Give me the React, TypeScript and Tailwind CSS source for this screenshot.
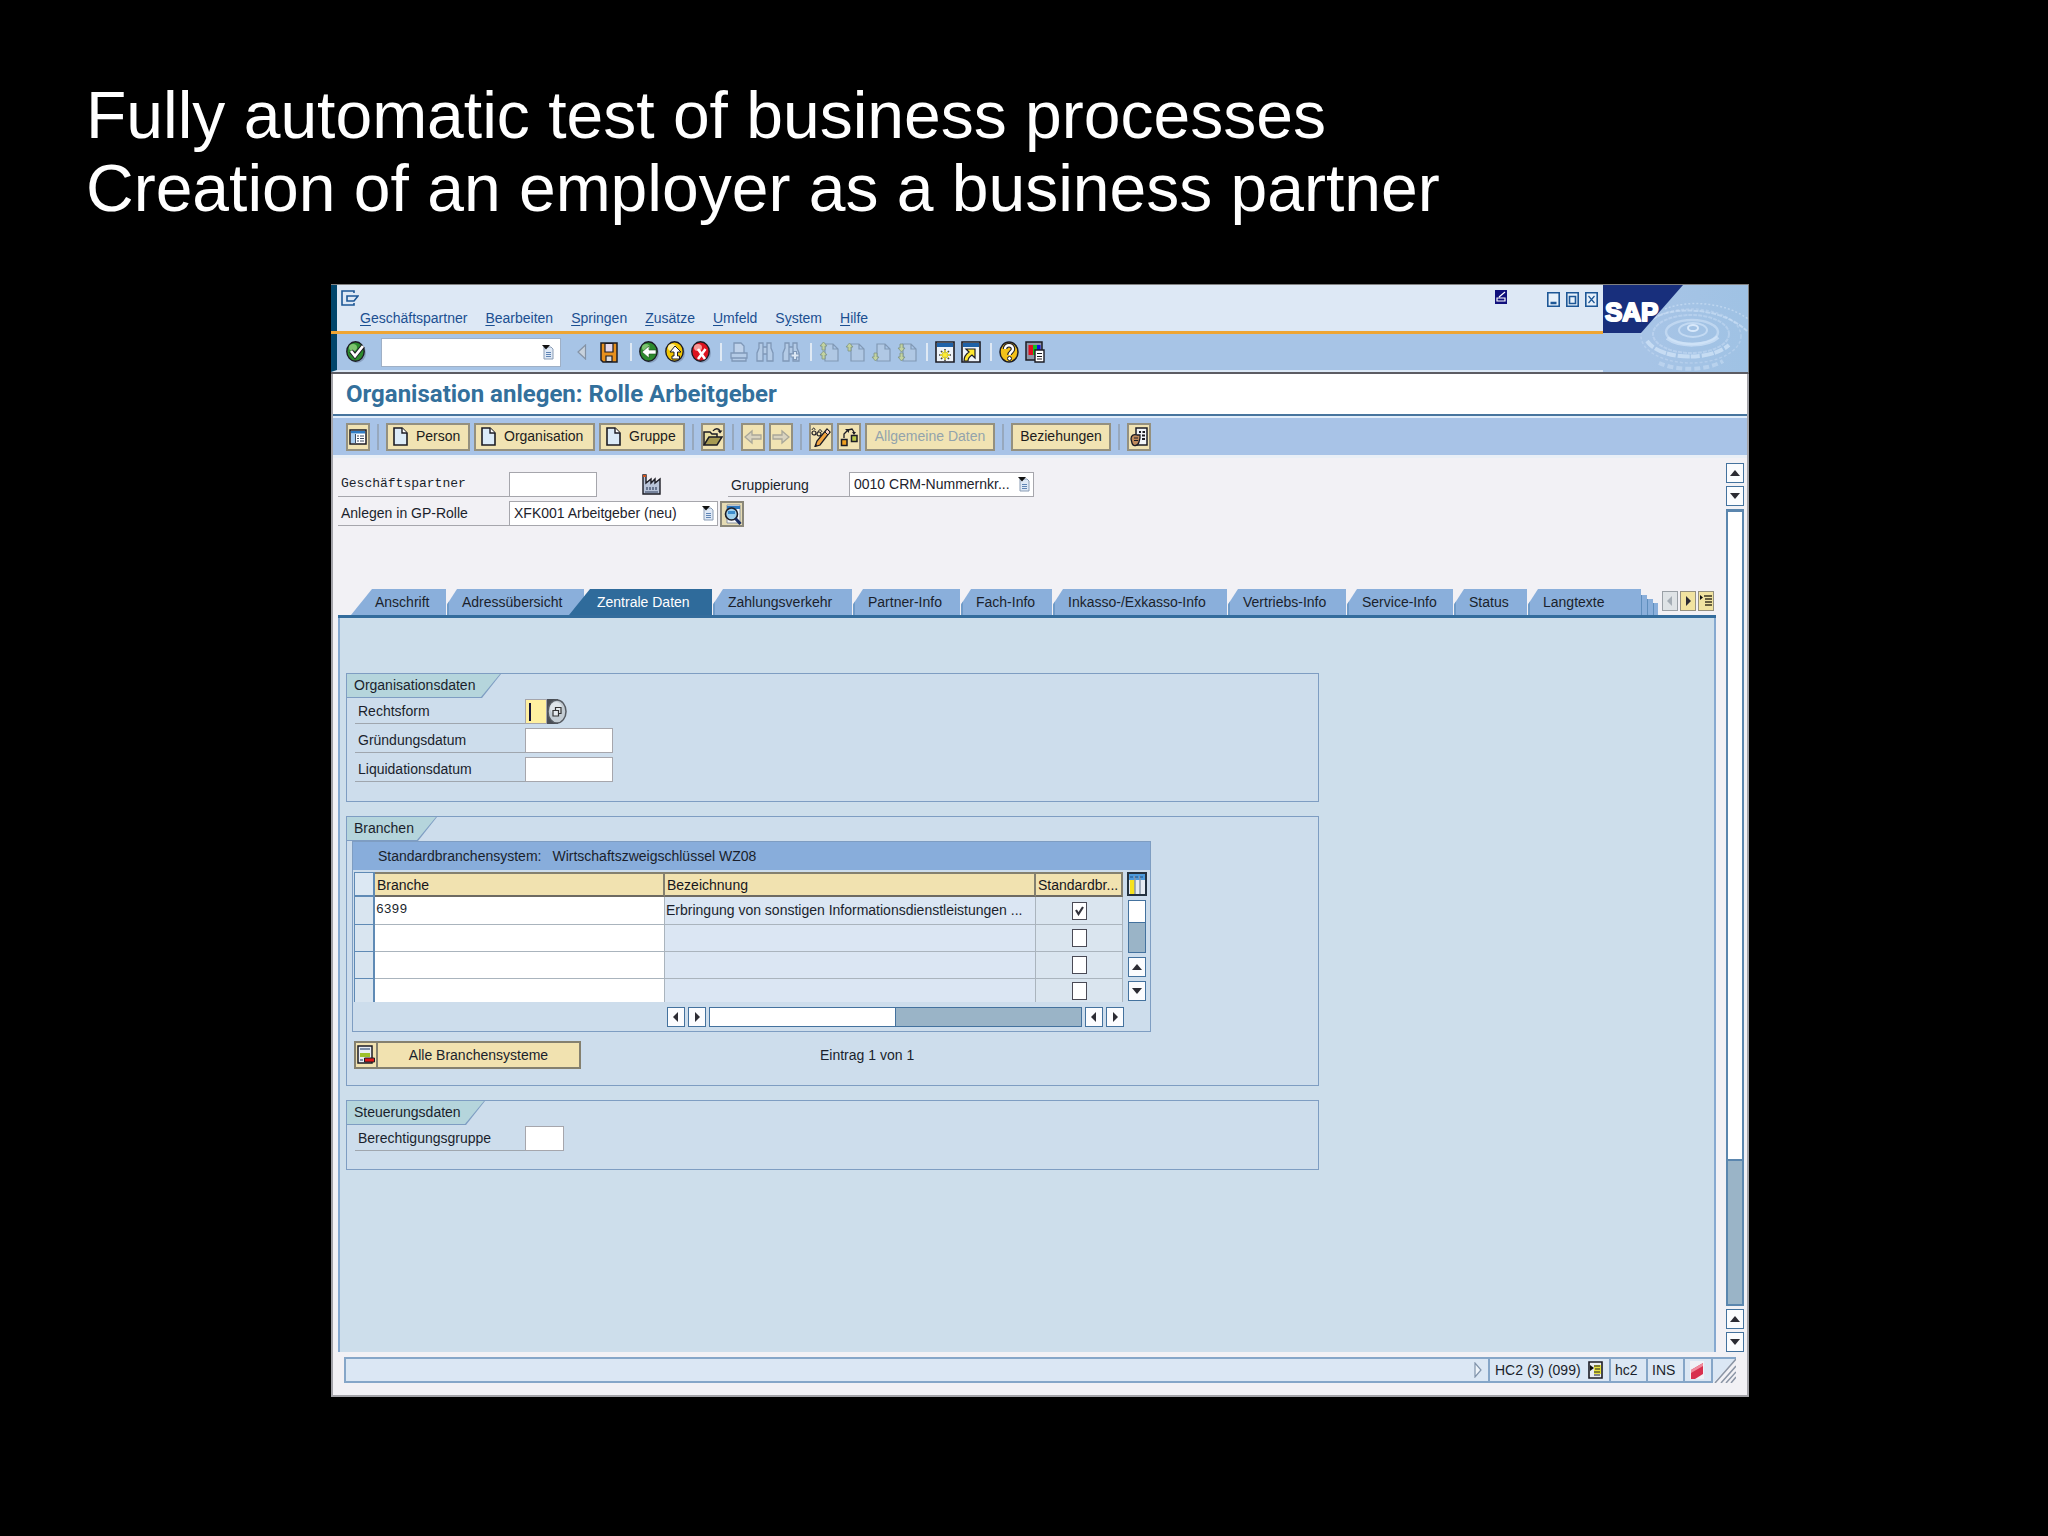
import React from 'react';
import clsx from 'clsx';

const INK = '#1c1c24';

interface IconProps {
    className?: string;
    box?: string;
    children: React.ReactNode;
}

const Icon: React.FC<IconProps> = ({ className = 'w-5 h-[22px]', box = '0 0 20 22', children }) => (
    <svg viewBox={box} preserveAspectRatio="none" className={clsx('shrink-0', className)} fill="none" aria-hidden="true">
        {children}
    </svg>
);

const PageIcon = () => (
    <Icon className="w-[15px] h-[19px]" box="0 0 15 19">
        <path d="M1 1H9L14 6V18H1Z" fill="#dcebf8" stroke={INK} strokeWidth="1.6" />
        <path d="M9 1V6H14" fill="#fff" stroke={INK} strokeWidth="1.4" />
    </Icon>
);

// little sheet with a black triangle that marks every drop-down
const ListIcon = ({ className }: { className?: string }) => (
    <Icon className={clsx('w-3 h-[15px] pointer-events-none', className)} box="0 0 12 15">
        <path d="M2 2H9L11 4V14H2Z" fill="#dfe9f6" stroke="#8b9db5" />
        <path d="M4 7.500H9M4 9.500H9M4 11.500H9" stroke="#5f84b4" />
        <path d="M0 0H8L4 4.500Z" fill="#111" />
    </Icon>
);

const Ball = ({ color, light }: { color: string; light: string }) => (
    <>
        <ellipse cx="11" cy="12" rx="9" ry="10" fill="#7389a8" opacity=".6" />
        <ellipse cx="9.500" cy="10.500" rx="8.700" ry="9.700" fill={color} stroke={INK} strokeWidth="1.4" />
        <ellipse cx="7" cy="6.500" rx="4" ry="3.500" fill={light} />
    </>
);

const binoculars = (
    <path d="M2 20V12L4 7V2H8V6H12V2H16V7L18 12V20H12V13H8V20ZM8 6V13M12 6V13" stroke="#7f98b8" strokeWidth="1.3" fill="#b4cbe6" />
);

const sheet = <path d="M6 3H14L19 8V20H6Z M14 3V8H19" fill="#b0c8e4" stroke="#8199b5" strokeWidth="1.2" />;
const up = (y: number) => <path key={y} d={`M4.500 ${y}L8 ${y + 4}H6V${y + 8}H3V${y + 4}H1Z`} fill="#c3d3a0" stroke="#7f9483" strokeWidth=".8" />;
const down = (y: number) => <path key={y} d={`M4.500 ${y + 8}L8 ${y + 4}H6V${y}H3V${y + 4}H1Z`} fill="#c3d3a0" stroke="#7f9483" strokeWidth=".8" />;

const toolGroups: { label: string; art: React.ReactNode }[][] = [
    [
        { label: 'Zurück', art: <><Ball color="#2c8a2e" light="#7cc46e" /><path d="M3 11L10 5V9H17V13H10V17Z" fill="#fff" stroke="#1c4d1c" strokeWidth=".6" /></> },
        { label: 'Beenden', art: <><Ball color="#f0c400" light="#fff0a0" /><path d="M10 5L16 11H12.500V15H14.500V18H7V15H9V11H5Z" fill="#fff" stroke={INK} strokeWidth="1" /></> },
        { label: 'Abbrechen', art: <><Ball color="#dd1420" light="#f79a98" /><path d="M7 8L14 18M14.500 8L7 18" stroke="#fff" strokeWidth="2.600" /></> },
    ],
    [
        { label: 'Drucken', art: <><path d="M5 12V2H12L15 5V12" fill="#bfd2ea" stroke="#7f98b8" strokeWidth="1.300" /><path d="M2 12H18V17H2ZM3 17V20H17V17" fill="#b4cbe6" stroke="#7f98b8" strokeWidth="1.300" /></> },
        { label: 'Suchen', art: binoculars },
        { label: 'Weiter suchen', art: <>{binoculars}<path d="M14 10V19M9.500 14.500H18.500" stroke="#7f98b8" strokeWidth="4" /><path d="M14 11V18M10.500 14.500H17.500" stroke="#dde8f4" strokeWidth="2" /></> },
    ],
    [
        { label: 'Erste Seite', art: <>{sheet}{up(1)}{up(10)}</> },
        { label: 'Vorige Seite', art: <>{sheet}{up(2)}</> },
        { label: 'Nächste Seite', art: <>{sheet}{down(12)}</> },
        { label: 'Letzte Seite', art: <>{sheet}{down(3)}{down(12)}</> },
    ],
    [
        { label: 'Neuer Modus', art: <><path d="M1 1H19V21H1Z" fill="#eef3f8" stroke={INK} strokeWidth="1.600" /><path d="M2 2H18V6H2Z" fill="#1f62a8" /><path d="M10 8V20M4 14H16M6 10L14 18M14 10L6 18" stroke="#444" strokeWidth="1.600" /><path d="M10 9V19M5 14H15M7 11L13 17M13 11L7 17" stroke="#ffef30" strokeWidth="1.400" /></> },
        { label: 'Verknüpfung', art: <><path d="M1 1H19V21H1Z" fill="#eef3f8" stroke={INK} strokeWidth="1.600" /><path d="M2 2H18V6H2Z" fill="#1f62a8" /><path d="M5 8H14V17L11 14C8 16 7 18 7 20H3C3 15 5 13 8 11Z" fill="#ffe830" stroke={INK} strokeWidth="1.200" /></> },
    ],
    [
        { label: 'Hilfe', art: <><ellipse cx="10" cy="11" rx="9" ry="10" fill="#f3c21a" stroke={INK} strokeWidth="1.500" /><path d="M6 8C6 3 14 3 14 8C14 11 10.500 11 10.500 14" stroke={INK} strokeWidth="4.500" /><path d="M6 8C6 3 14 3 14 8C14 11 10.500 11 10.500 14" stroke="#fff" strokeWidth="2.400" /><circle cx="10.500" cy="17.500" r="2" fill="#fff" stroke={INK} /></> },
        { label: 'Lokales Layout', art: <><path d="M1 1H17V19H1Z" fill="#8f97a8" stroke={INK} strokeWidth="1.500" /><path d="M3.500 4H8V14H3.500Z" fill="#e01020" /><path d="M8 4H12V14H8Z" fill="#12c020" /><path d="M12 4H15.500V14H12Z" fill="#1010e0" /><path d="M10 9H19V21H10Z" fill="#fff" stroke={INK} strokeWidth="1.400" /><path d="M12 12.500H17M12 15.500H17M12 18H17" stroke={INK} /></> },
    ],
];

const Sep = ({ className }: { className?: string }) => <span className={clsx('w-[2px] shrink-0', className)} />;

const menus = ['Geschäftspartner', 'Bearbeiten', 'Springen', 'Zusätze', 'Umfeld', 'System', 'Hilfe'];

const MenuLabel = ({ text }: { text: string }) => {
    const at = text === 'System' ? 1 : 0;
    return <>{text.slice(0, at)}<span className="underline underline-offset-2">{text[at]}</span>{text.slice(at + 1)}</>;
};

const Logo = () => (
    <svg viewBox="0 0 145 87" className="w-[145px] h-[87px] shrink-0 bg-[#a4c4e5]" role="img" aria-label="SAP">
        <defs>
            <linearGradient id="water" x1="0" x2="1" y1="0" y2="0">
                <stop offset=".3" stopColor="#a7c4e6" />
                <stop offset="1" stopColor="#9fc2e4" />
            </linearGradient>
        </defs>
        <rect width="146" height="87" fill="url(#water)" />
        <g fill="none" stroke="#d9e9fb">
            <ellipse cx="90" cy="43" rx="5" ry="3" strokeWidth="2" />
            <ellipse cx="90" cy="45" rx="14" ry="7" strokeWidth="2" opacity=".6" />
            <ellipse cx="89" cy="47" rx="26" ry="12" strokeWidth="2.500" opacity=".5" />
            <ellipse cx="88" cy="49" rx="38" ry="19" strokeWidth="2" opacity=".35" strokeDasharray="4 1" />
            <ellipse cx="88" cy="51" rx="50" ry="27" strokeWidth="1.500" opacity=".3" strokeDasharray="3 2" />
            <path d="M64 53C76 62 104 62 115 52" strokeWidth="4" opacity=".6" />
            <path d="M44 56C58 76 108 76 126 60" strokeWidth="4" strokeDasharray="9 2 12 1" opacity=".65" />
            <path d="M56 78C74 86 104 86 120 76" strokeWidth="4" strokeDasharray="6 3" opacity=".4" />
            <path d="M50 34C66 22 116 20 144 46" strokeWidth="2" strokeDasharray="5 1" opacity=".5" />
            <path d="M62 24C86 14 124 18 145 34" strokeWidth="1.500" strokeDasharray="2 2" opacity=".5" />
        </g>
        <path d="M0 0H80L38 48H0Z" fill="#182f7c" />
        <text x="2" y="36" fill="#fff" stroke="#fff" strokeWidth="2" strokeLinejoin="round" fontSize="26" fontWeight="700" fontFamily="Liberation Sans, Arial, sans-serif">SAP</text>
    </svg>
);

const Header = () => (
    <header className="flex border-t border-r border-t-[#808080] border-r-[#808080] border-b-2 border-b-[#5c5c63]">
        <div className="flex-1 min-w-0">
            <div className="h-[46px] flex border-l-[6px] border-[#00456b] bg-[#dde8f5] pt-[5px]">
                <div className="flex-1 pl-1">
                    <Icon className="w-[18px] h-[16px]" box="0 0 18 16">
                        <path d="M13 3V1H1V15H13V13" stroke="#1d5796" strokeWidth="1.600" />
                        <path d="M6 6H17L13 11H6Z" stroke="#1d5796" strokeWidth="1.600" />
                    </Icon>
                    <nav className="flex gap-[18px] pl-[19px] mt-[2px] leading-5 text-[#1b4f91]">
                        {menus.map((m) => (
                            <button key={m} type="button" className="leading-5"><MenuLabel text={m} /></button>
                        ))}
                    </nav>
                </div>
                <div className="flex items-start pr-[5px]">
                    <Icon className="w-3 h-[14px] mr-10" box="0 0 12 14">
                        <rect width="12" height="14" fill="#10107c" />
                        <path d="M2 8H10V11H2ZM4 7L10 2" stroke="#fff" strokeWidth="1.200" />
                    </Icon>
                    <div className="flex gap-[6px] pt-[2px]">
                        <button type="button" aria-label="Minimieren" className="w-[13px] h-[15px]">
                            <Icon className="w-[13px] h-[15px]" box="0 0 13 15"><path d="M.8.8H12.200V14.200H.8Z" stroke="#1d5796" strokeWidth="1.600" fill="#e6f0fa" /><path d="M3.500 11H9.500" stroke="#1d5796" strokeWidth="2.500" /></Icon>
                        </button>
                        <button type="button" aria-label="Maximieren" className="w-[13px] h-[15px]">
                            <Icon className="w-[13px] h-[15px]" box="0 0 13 15"><path d="M.8.8H12.200V14.200H.8Z" stroke="#1d5796" strokeWidth="1.600" fill="#e6f0fa" /><path d="M3.500 4.500H9.500V11.500H3.500ZM3 4.500H10" stroke="#1d5796" strokeWidth="1.600" /></Icon>
                        </button>
                        <button type="button" aria-label="Schließen" className="w-[13px] h-[15px]">
                            <Icon className="w-[13px] h-[15px]" box="0 0 13 15"><path d="M.8.8H12.200V14.200H.8Z" stroke="#1d5796" strokeWidth="1.600" fill="#e6f0fa" /><path d="M3.500 4L9.500 11M9.500 4L3.500 11" stroke="#1d5796" strokeWidth="1.200" /></Icon>
                        </button>
                    </div>
                </div>
            </div>
            <div className="h-[3px] bg-[#eea533]" />
            <div className="h-[38px] flex items-center border-l-[6px] border-l-[#00456b] border-b-2 border-b-[#dbe8f6] bg-[#a7c4e6] pl-[9px]">
                <button type="button" aria-label="Enter">
                    <Icon><Ball color="#2c8a2e" light="#7cc46e" /><path d="M5 10L9 15L17 5" stroke={INK} strokeWidth="4.500" /><path d="M5 10L9 15L17 5" stroke="#fff" strokeWidth="2.800" /></Icon>
                </button>
                <div className="relative ml-[15px]">
                    <input aria-label="Kommandofeld" className="block w-[180px] h-[29px] border border-[#9fb0c6] bg-white px-2 outline-none" />
                    <ListIcon className="absolute right-[7px] top-[7px]" />
                </div>
                <button type="button" aria-label="Zuklappen" className="ml-4">
                    <Icon className="w-[10px] h-[16px]" box="0 0 10 16"><path d="M8.500 1V15L1 8Z" fill="#c8d2dd" stroke="#8493a6" strokeWidth="1.200" /></Icon>
                </button>
                <button type="button" aria-label="Sichern" className="ml-[13px] mr-[3px]">
                    <Icon className="w-[18px] h-[21px]" box="0 0 18 21">
                        <path d="M1 1H17V20H3L1 18Z" fill="#e8901c" stroke={INK} strokeWidth="1.500" />
                        <path d="M5 1.500H13V10H5Z" fill="#e6d8ea" stroke={INK} strokeWidth="1.200" />
                        <path d="M6 14H12V19.500H6Z" fill="#ddd" stroke={INK} strokeWidth="1.200" />
                    </Icon>
                </button>
                {toolGroups.map((group, i) => (
                    <div key={i} className="flex items-center gap-[6px] ml-[9px]">
                        <Sep className="h-[18px] mr-[1px] bg-[#dfe9f4]" />
                        {group.map(({ label, art }) => (
                            <button key={label} type="button" aria-label={label}><Icon>{art}</Icon></button>
                        ))}
                    </div>
                ))}
            </div>
        </div>
        <Logo />
    </header>
);

const btn = 'h-7 shrink-0 flex items-center border-2 border-[#94907f] bg-[#f1e3b3] text-[#1c1c1c]';

const IconButton = ({ label, children }: { label: string; children: React.ReactNode }) => (
    <button type="button" aria-label={label} className={clsx(btn, 'w-6 justify-center')}>{children}</button>
);

const BarSep = () => <Sep className="h-[26px] mx-[3px] bg-[#97a8bd]" />;

const AppBar = () => (
    <div className="flex items-center gap-1 h-[42px] border-t-2 border-b-[3px] border-t-[#e2eefb] border-b-[#e9eff6] bg-[#a8c3e7] pl-[13px]">
        <IconButton label="Übersicht">
            <Icon className="w-[18px] h-[16px]" box="0 0 18 16">
                <path d="M1 1H17V15H1Z" fill="#fff" stroke={INK} strokeWidth="1.500" />
                <path d="M2 2H16V4.500H2Z" fill="#2f7cc4" /><path d="M2 5H6V14H2Z" fill="#a8cdf0" />
                <path d="M6.500 5V14M8 7H10M11 7H15M8 9.500H10M11 9.500H15M8 12H10M11 12H15" stroke="#3a4a60" />
            </Icon>
        </IconButton>
        <BarSep />
        <button type="button" className={clsx(btn, 'w-[84px] pl-[5px] gap-2')}><PageIcon />Person</button>
        <button type="button" className={clsx(btn, 'w-[121px] pl-[5px] gap-2')}><PageIcon />Organisation</button>
        <button type="button" className={clsx(btn, 'w-[86px] pl-[5px] gap-2')}><PageIcon />Gruppe</button>
        <BarSep />
        <IconButton label="Öffnen">
            <Icon className="w-5 h-5" box="0 0 20 20">
                <path d="M1 18V5H7L9 7H14V10" fill="#e9dfa2" stroke={INK} strokeWidth="1.500" />
                <path d="M1 18L6 10H19L14 18Z" fill="#a79a52" stroke={INK} strokeWidth="1.500" />
                <path d="M10 4C12 1 16 1 17 4" stroke={INK} strokeWidth="1.300" /><path d="M14.500 3.500H19.500L17 6.500Z" fill={INK} />
            </Icon>
        </IconButton>
        <BarSep />
        <IconButton label="Zurück">
            <Icon className="w-[18px] h-4" box="0 0 18 16"><path d="M1 8L8 2V6H17V10H8V14Z" fill="#d9d3c0" stroke="#a9a799" strokeWidth="1.300" /></Icon>
        </IconButton>
        <IconButton label="Vor">
            <Icon className="w-[18px] h-4" box="0 0 18 16"><path d="M17 8L10 2V6H1V10H10V14Z" fill="#d9d3c0" stroke="#a9a799" strokeWidth="1.300" /></Icon>
        </IconButton>
        <BarSep />
        <IconButton label="Anzeigen/Ändern">
            <Icon className="w-5 h-5" box="0 0 20 20">
                <path d="M1 3C2 0 4 1 4 3M7 5C8 2 10 2 11 5" stroke={INK} />
                <circle cx="3" cy="6" r="2" stroke={INK} strokeWidth="1.200" /><circle cx="8" cy="7" r="2" stroke={INK} strokeWidth="1.200" />
                <path d="M16 2L19 5L9 18L4 19.500L6 14Z" fill="#f2a440" stroke={INK} strokeWidth="1.300" />
                <path d="M16 2L19 5L17 8L14 5Z" fill="#f5d0c0" stroke={INK} /><path d="M4 19.500L4.800 17L6.500 18.500Z" fill={INK} />
            </Icon>
        </IconButton>
        <IconButton label="Zuordnen">
            <Icon className="w-[18px] h-5" box="0 0 18 20">
                <path d="M1.500 12.500H7V18.500H1.500Z" fill="#f0a020" stroke={INK} strokeWidth="1.500" />
                <path d="M11.500 8.500H17V14.500H11.500Z" fill="#b8c848" stroke={INK} strokeWidth="1.500" />
                <path d="M4 11V7L8 3M8 3L12 2L14 5" stroke={INK} strokeWidth="1.300" /><path d="M5 2H9V6ZM12 5H16L14 8Z" fill={INK} />
            </Icon>
        </IconButton>
        <button type="button" disabled className={clsx(btn, 'w-[130px] justify-center')}><span className="text-[#93a3ac]">Allgemeine Daten</span></button>
        <BarSep />
        <button type="button" className={clsx(btn, 'w-[100px] justify-center')}>Beziehungen</button>
        <BarSep />
        <IconButton label="Selektion">
            <Icon className="w-[18px] h-5" box="0 0 18 20">
                <path d="M6 1H17V18H6Z" fill="#f2f5f9" stroke={INK} strokeWidth="1.500" />
                <path d="M9 5H11M12.500 5H15M12 8.500H15M12 12H15" stroke={INK} strokeWidth="2" />
                <path d="M1 12C1 8 4 7 7 8H10V11L9 15C8 19 3 20 2 16Z" fill="#c08a5c" stroke={INK} strokeWidth="1.300" />
                <path d="M4 11H8M4 13.500H8" stroke={INK} />
            </Icon>
        </IconButton>
    </div>
);

const field = 'block h-[25px] shrink-0 border border-[#a6a6ac] bg-white outline-none rounded-none';

interface PickerProps {
    id: string;
    value: string;
    className: string;
}

const Picker: React.FC<PickerProps> = ({ id, value, className }) => (
    <div className={clsx('relative shrink-0', className)}>
        <select id={id} className={clsx(field, 'appearance-none w-full pl-1 pb-px text-[#22222c]')}>
            <option>{value}</option>
        </select>
        <ListIcon className="absolute right-[4px] top-[5px]" />
    </div>
);

const HeadForm = () => (
    <div className="flex flex-col gap-1 pt-[14px] pl-[5px]">
        <div className="flex">
            <label htmlFor="gp" className="w-[171px] h-[25px] leading-6 pl-[3px] border-b border-[#a6a6ac] font-['Liberation_Mono',monospace] text-[13px]">Geschäftspartner</label>
            <input id="gp" className={clsx(field, 'w-[88px] px-1')} />
            <Icon className="w-[19px] h-[21px] ml-[45px] mr-[67px] mt-[2px]" box="0 0 19 21">
                <path d="M1 20V1H4V9L9 5V9L13 5V9L18 5V20Z" fill="#b9c4d8" stroke={INK} strokeWidth="1.400" />
                <path d="M1 2H4" stroke="#d2541c" strokeWidth="2" /><path d="M5 13V16M8 13V16M11 13V16M14 13V16M3 18H16" stroke="#33415f" strokeWidth="1.200" />
            </Icon>
            <label htmlFor="grp" className="w-[121px] h-[25px] leading-[26px] pl-[3px] border-b border-[#a6a6ac]">Gruppierung</label>
            <Picker id="grp" value="0010 CRM-Nummernkr..." className="w-[185px]" />
        </div>
        <div className="flex">
            <label htmlFor="rolle" className="w-[171px] h-[25px] leading-6 pl-[3px] border-b border-[#a6a6ac]">Anlegen in GP-Rolle</label>
            <Picker id="rolle" value="XFK001 Arbeitgeber (neu)" className="w-[209px]" />
            <button type="button" aria-label="Detail" className="w-6 h-[26px] ml-[2px] flex items-center justify-center border-2 border-[#8b887a] bg-[#e6dcb4]">
                <Icon className="w-[19px] h-[21px]" box="0 0 19 21">
                    <path d="M4 1H17V19H4Z" fill="#f6f8fa" stroke="#8a93a0" /><path d="M4 2H17V5H4Z" fill="#2c78bf" />
                    <circle cx="8.500" cy="10" r="6" fill="#9fd0ee" stroke={INK} strokeWidth="1.600" />
                    <path d="M5 7H12V10H5Z" fill="#3d8ccc" /><path d="M12.500 14.500L17.500 20" stroke="#1b2f66" strokeWidth="3" />
                </Icon>
            </button>
        </div>
    </div>
);

const tabs = [
    { name: 'Anschrift', width: 'w-[95px]' },
    { name: 'Adressübersicht', width: 'w-[137px]' },
    { name: 'Zentrale Daten', width: 'w-[143px]' },
    { name: 'Zahlungsverkehr', width: 'w-[139px]' },
    { name: 'Partner-Info', width: 'w-[107px]' },
    { name: 'Fach-Info', width: 'w-[91px]' },
    { name: 'Inkasso-/Exkasso-Info', width: 'w-[174px]' },
    { name: 'Vertriebs-Info', width: 'w-[118px]' },
    { name: 'Service-Info', width: 'w-[106px]' },
    { name: 'Status', width: 'w-[73px]' },
    { name: 'Langtexte', width: 'w-[113px]' },
];

const Arrow = ({ dir, color = '#2b2b33' }: { dir: 'up' | 'down' | 'left' | 'right'; color?: string }) => {
    const paths = { up: 'M0 8L5 2L10 8Z', down: 'M0 2L5 8L10 2Z', left: 'M7 0V10L2 5Z', right: 'M3 0V10L8 5Z' };
    return <Icon className="w-[10px] h-[10px]" box="0 0 10 10"><path d={paths[dir]} fill={color} /></Icon>;
};

const TabStrip = () => (
    <div className="flex h-[29px] border-b-[3px] border-[#336c9c]">
        <div role="tablist" className="flex gap-px pl-[13px] h-[26px]">
            {tabs.map(({ name, width }, i) => {
                const active = name === 'Zentrale Daten';
                return (
                    <button
                        key={name}
                        type="button"
                        role="tab"
                        aria-selected={active}
                        className={clsx(
                            'shrink-0 text-left leading-[26px] whitespace-nowrap',
                            width,
                            i === 0 && 'pl-6 bg-[#8aafdb] [clip-path:polygon(0_100%,21px_0,100%_0,100%_100%)]',
                            active && '-ml-4 pl-7 bg-[#2f6b9b] text-white [clip-path:polygon(0_100%,21px_0,100%_0,100%_100%)]',
                            i > 0 && !active && 'pl-[13px] border-l-2 border-[#6f9bc8] bg-[#8aafdb] [clip-path:polygon(0_60%,10px_0,100%_0,100%_100%,0_100%)]'
                        )}
                    >
                        {name}
                    </button>
                );
            })}
        </div>
        <div className="flex items-end h-[26px]">
            <span className="w-[6px] h-5 border-l border-[#5f8ebd] bg-[#8aafdb]" />
            <span className="w-[6px] h-4 border-l border-[#5f8ebd] bg-[#8aafdb]" />
            <span className="w-[5px] h-3 border-l border-[#5f8ebd] bg-[#8aafdb]" />
        </div>
        <div className="flex gap-[2px] pt-[2px] pl-1">
            <button type="button" aria-label="Tabs zurück" className="w-4 h-5 flex items-center justify-center border border-[#9aa0a6] bg-[#dfe3e6]"><Arrow dir="left" color="#a5adb5" /></button>
            <button type="button" aria-label="Tabs vor" className="w-4 h-5 flex items-center justify-center border border-[#94907f] bg-[#f1e3a0]"><Arrow dir="right" /></button>
            <button type="button" aria-label="Tabliste" className="w-4 h-5 flex items-center justify-center border border-[#94907f] bg-[#f1e3a0]">
                <Icon className="w-3 h-[14px]" box="0 0 12 14"><path d="M0 1V6L3 3.500Z" fill="#111" /><path d="M4 2H12M5 5H12M5 8H12M5 11H12" stroke="#3a3420" strokeWidth="1.500" /></Icon>
            </button>
        </div>
    </div>
);

interface GroupProps {
    title: string;
    tab: string;
    className: string;
    children: React.ReactNode;
}

const Group: React.FC<GroupProps> = ({ title, tab, className, children }) => (
    <section className={clsx('w-[973px] max-w-full border border-[#7e9dc2] bg-[#cdddec]', className)}>
        <div className={clsx('h-6 pb-px pr-px bg-[#7e9dc2] [clip-path:polygon(0_0,100%_0,calc(100%_-_19px)_100%,0_100%)]', tab)}>
            <h2 className="h-full pl-[7px] leading-[22px] bg-[#b5d5dc] [clip-path:polygon(0_0,100%_0,calc(100%_-_19px)_100%,0_100%)]">{title}</h2>
        </div>
        {children}
    </section>
);

const FieldRow = ({ id, label, children }: { id: string; label: string; children: React.ReactNode }) => (
    <div className="flex ml-2 h-[25px]">
        <label htmlFor={id} className="w-[170px] leading-6 pl-[3px] border-b border-[#9fa6ae]">{label}</label>
        {children}
    </div>
);

const ScrollButton = ({ dir, className = 'w-[18px] h-5' }: { dir: 'up' | 'down' | 'left' | 'right'; className?: string }) => (
    <button type="button" aria-label={dir} className={clsx('shrink-0 flex items-center justify-center border border-[#44729e] bg-[#fbfcfe]', className)}>
        <Arrow dir={dir} />
    </button>
);

const rows = [
    { code: '6399', text: 'Erbringung von sonstigen Informationsdienstleistungen ...', standard: true, height: 'h-[28px]' },
    { code: '', text: '', standard: false, height: 'h-[27px]' },
    { code: '', text: '', standard: false, height: 'h-[27px]' },
    { code: '', text: '', standard: false, height: 'h-[23px]' },
];

const th = 'h-[25px] pl-[2px] border-2 border-l-0 border-t-[#84806f] border-r-[#84806f] border-b-[#6d6a62] bg-[#f1e2b0] font-normal text-left leading-5 text-[#16161c]';

const BranchTable = () => (
    <div className="w-[799px] ml-[5px] border border-[#7e9dc2]">
        <div className="flex gap-[11px] h-7 pl-[25px] leading-[28px] bg-[#88addb]">
            <span>Standardbranchensystem:</span>
            <span>Wirtschaftszweigschlüssel WZ08</span>
        </div>
        <div className="flex gap-1 pt-[2px] pl-px">
            <table className="table-fixed w-[769px] border-separate border-spacing-0">
                <colgroup>
                    <col className="w-[21px]" />
                    <col className="w-[290px]" />
                    <col className="w-[371px]" />
                    <col className="w-[87px]" />
                </colgroup>
                <thead>
                    <tr>
                        <th aria-label="Markierung" className="p-0 border-t border-l border-r-2 border-b-2 border-[#5f8ab5] bg-[#dce8f3]" />
                        <th className={th}>Branche</th>
                        <th className={th}>Bezeichnung</th>
                        <th className={th}>Standardbr...</th>
                    </tr>
                </thead>
                <tbody>
                    {rows.map((row, i) => (
                        <tr key={i}>
                            <td className={clsx('p-0 border-l border-r-2 border-[#5f8ab5] bg-[#d9e5f0]', i < 3 && 'border-b', row.height)} />
                            <td className={clsx('p-0 border-r border-[#aab4bd] bg-white', i < 3 && 'border-b')}>
                                <input aria-label={`Branche ${i + 1}`} defaultValue={row.code} className="block w-full h-[22px] pl-px pb-[2px] outline-none font-['Liberation_Mono',monospace] text-[13px]" />
                            </td>
                            <td className={clsx('p-0 pl-px border-r border-[#aab4bd] bg-[#dbe6f3] whitespace-nowrap', i < 3 && 'border-b')}>{row.text}</td>
                            <td className={clsx('p-0 border-r border-[#aab4bd] bg-[#dae5ef]', i < 3 && 'border-b')}>
                                <span className="relative flex w-[15px] h-[18px] mx-auto">
                                    <input type="checkbox" aria-label={`Standardbranche ${i + 1}`} defaultChecked={row.standard} className="appearance-none w-full h-full border border-[#4a4a55] bg-white" />
                                    {row.standard && (
                                        <Icon className="absolute left-[3px] top-1 w-[9px] h-[10px] pointer-events-none" box="0 0 9 10">
                                            <path d="M1 4L3.500 8L8 1" stroke="#33333c" strokeWidth="2.200" />
                                        </Icon>
                                    )}
                                </span>
                            </td>
                        </tr>
                    ))}
                </tbody>
            </table>
            <div className="flex flex-col items-center gap-1 w-5">
                <button type="button" aria-label="Konfiguration">
                    <Icon className="w-5 h-6" box="0 0 20 24">
                        <path d="M1 1H19V23H1Z" fill="#e6ecf2" stroke="#24323f" strokeWidth="2" />
                        <path d="M2 2H18V8H2Z" fill="#4d9bdc" /><path d="M3 8H8V22H3Z" fill="#f6e21c" />
                        <path d="M8 4V22M13 4V22" stroke="#8996a8" strokeWidth="1.500" /><path d="M3 5H17" stroke="#1d4f86" strokeDasharray="3 2" />
                    </Icon>
                </button>
                <div className="w-[18px] h-[53px] flex flex-col border border-[#44729e] bg-[#9ab4c7]">
                    <span className="h-[22px] border-b border-[#44729e] bg-white" />
                </div>
                <ScrollButton dir="up" />
                <ScrollButton dir="down" />
            </div>
        </div>
        <div className="flex gap-[3px] mt-[5px] mb-1 ml-[314px] mr-[26px]">
            <ScrollButton dir="left" />
            <ScrollButton dir="right" />
            <div className="flex-1 h-5 flex border border-[#44729e] bg-[#9ab4c7]">
                <span className="w-1/2 border-r border-[#44729e] bg-white" />
            </div>
            <ScrollButton dir="left" />
            <ScrollButton dir="right" />
        </div>
    </div>
);

const Panel = () => (
    <div className="flex-1 flex flex-col gap-[14px] pt-[55px] pl-[6px] border-l-2 border-r-2 border-[#86a9d0] bg-[#cddeeb]">
        <Group title="Organisationsdaten" tab="w-[154px]" className="pb-[19px]">
            <div className="flex flex-col gap-[4px] pt-px">
                <FieldRow id="rechtsform" label="Rechtsform">
                    <div className="relative">
                        <input id="rechtsform" className="block w-[22px] h-[25px] border border-[#a6a6ac] bg-[#fff0a0] outline-none" />
                        <span className="absolute left-1 top-1 w-[2px] h-[18px] bg-[#14143c]" />
                    </div>
                    <button type="button" aria-label="Werthilfe">
                        <Icon className="w-5 h-[25px]" box="0 0 20 25">
                            <path d="M0 0H11V25H0Z" fill="#4a4e55" />
                            <ellipse cx="10" cy="12.500" rx="9" ry="11.500" fill="#c3ccd3" stroke="#565b62" strokeWidth="1.500" />
                            <ellipse cx="9" cy="9" rx="6" ry="6" fill="#dfe5ea" />
                            <path d="M8.500 12V8.500H14V14.500H11.500M6 11.500H11.500V17H6Z" stroke="#333" strokeWidth="1.200" fill="#e6ebef" />
                        </Icon>
                    </button>
                </FieldRow>
                <FieldRow id="gruendung" label="Gründungsdatum"><input id="gruendung" className={clsx(field, 'w-[88px] px-1')} /></FieldRow>
                <FieldRow id="liquidation" label="Liquidationsdatum"><input id="liquidation" className={clsx(field, 'w-[88px] px-1')} /></FieldRow>
            </div>
        </Group>
        <Group title="Branchen" tab="w-[90px]" className="pb-[16px]">
            <BranchTable />
            <div className="flex items-center mt-[9px] ml-[7px]">
                <button type="button" className="flex w-[227px] h-7 border-2 border-[#84806f] bg-[#f1e2b0] leading-6">
                    <span className="w-[22px] h-full flex items-center justify-center border-r-2 border-[#84806f]">
                        <Icon className="w-[18px] h-5" box="0 0 18 20">
                            <path d="M1 1H15V18H1Z" fill="#e9eef4" stroke={INK} strokeWidth="1.500" />
                            <path d="M3 4H13" stroke="#7d8fa8" strokeWidth="2" /><path d="M3 8H13V12H3Z" fill="#9cc02c" />
                            <path d="M3 15H6" stroke="#7d8fa8" strokeWidth="2" /><path d="M7.500 13H17.500V17H7.500Z" fill="#e01818" stroke={INK} />
                        </Icon>
                    </span>
                    <span className="flex-1 text-center">Alle Branchensysteme</span>
                </button>
                <span className="ml-[239px]">Eintrag 1 von 1</span>
            </div>
        </Group>
        <Group title="Steuerungsdaten" tab="w-[138px]" className="pb-[18px]">
            <div className="pt-px">
                <FieldRow id="berechtigung" label="Berechtigungsgruppe"><input id="berechtigung" className={clsx(field, 'w-[39px] px-1')} /></FieldRow>
            </div>
        </Group>
    </div>
);

const StatusBar = () => (
    <footer className="flex ml-[11px] mr-[11px] mt-[5px] mb-3 h-[26px] leading-[23px]">
        <div className="flex-1 flex items-center justify-end pr-[6px] border-2 border-r-0 border-[#86a6c8] bg-[#dbe7f4]">
            <Icon className="w-2 h-4" box="0 0 8 16"><path d="M1 1V15L7 8Z" fill="#eef4fa" stroke="#8194ab" strokeWidth="1.200" /></Icon>
        </div>
        <div className="flex items-center gap-[7px] w-[121px] pl-[5px] border-2 border-r-0 border-[#86a6c8] bg-[#dbe7f4]">
            <span className="whitespace-nowrap">HC2 (3) (099)</span>
            <Icon className="w-[15px] h-[18px]" box="0 0 15 18">
                <path d="M1 1H14V17H1Z" fill="#e9edf2" stroke={INK} strokeWidth="1.600" /><path d="M6 4H13V13H6Z" fill="#e8e23c" />
                <path d="M2 4V10L6 7Z" fill="#111" /><path d="M6 5H12M7 8H12M6 11H12M6 14H12" stroke={INK} strokeWidth="1.200" />
            </Icon>
        </div>
        <div className="w-[37px] pl-1 border-2 border-r-0 border-[#86a6c8] bg-[#dbe7f4]">hc2</div>
        <div className="w-[37px] pl-1 border-2 border-r-0 border-[#86a6c8] bg-[#dbe7f4]">INS</div>
        <div className="w-[30px] flex items-center pl-[5px] border-2 border-[#86a6c8] bg-[#dbe7f4]">
            <Icon className="w-[14px] h-[18px]" box="0 0 14 18">
                <path d="M0 0H14V18H0Z" fill="#f0f1f6" /><path d="M1 9L13 2V13L5 18H1Z" fill="#d8304f" /><path d="M1 12L13 5V2L1 9Z" fill="#f08a9c" />
            </Icon>
        </div>
        <Icon className="w-[23px] h-[26px]" box="0 0 23 26">
            <path d="M0 1H23L1 25H0Z" fill="#dbe7f4" /><path d="M0 1H23" stroke="#86a6c8" strokeWidth="2" />
            <path d="M2 26L23 2M8 26L23 9M13 26L23 15M18 26L23 20" stroke="#8b95a5" strokeWidth="1.500" />
        </Icon>
    </footer>
);

export default function App() {
    return (
        <main className="min-h-screen flex flex-col bg-black pt-[79px] pb-[139px] font-['Liberation_Sans',Arial,sans-serif]">
            <h1 className="pl-[86px] text-[66px] leading-[73px] text-white">
                Fully automatic test of business processes
                <br />
                Creation of an employer as a business partner
            </h1>
            <div className="flex-1 flex flex-col mt-[59px] ml-[331px] mr-[299px] text-[14px] text-[#1a1f2c]">
                <Header />
                <div className="flex-1 flex flex-col border-2 border-t-0 border-[#a3a3a8] bg-[#f2f1f5]">
                    <div className="h-[42px] pl-[13px] leading-10 border-b-2 border-[#47759e] bg-white">
                        <h2 className="font-['Roboto',sans-serif] font-bold text-[24px] text-[#33709c]">Organisation anlegen: Rolle Arbeitgeber</h2>
                    </div>
                    <AppBar />
                    <div className="flex-1 flex">
                        <div className="flex-1 flex flex-col">
                            <HeadForm />
                            <div className="flex-1 flex flex-col mt-[62px] ml-[5px]">
                                <TabStrip />
                                <Panel />
                            </div>
                        </div>
                        <div className="flex flex-col gap-[3px] w-[18px] ml-[10px] mr-[3px] mt-[5px]">
                            <ScrollButton dir="up" />
                            <ScrollButton dir="down" />
                            <div className="flex-1 flex flex-col border-2 border-t-[3px] border-[#5b86ae] bg-[#9ab4c7]">
                                <span className="h-[82%] border-b-2 border-[#5b86ae] bg-white" />
                            </div>
                            <ScrollButton dir="up" />
                            <ScrollButton dir="down" />
                        </div>
                    </div>
                    <StatusBar />
                </div>
            </div>
        </main>
    );
}
